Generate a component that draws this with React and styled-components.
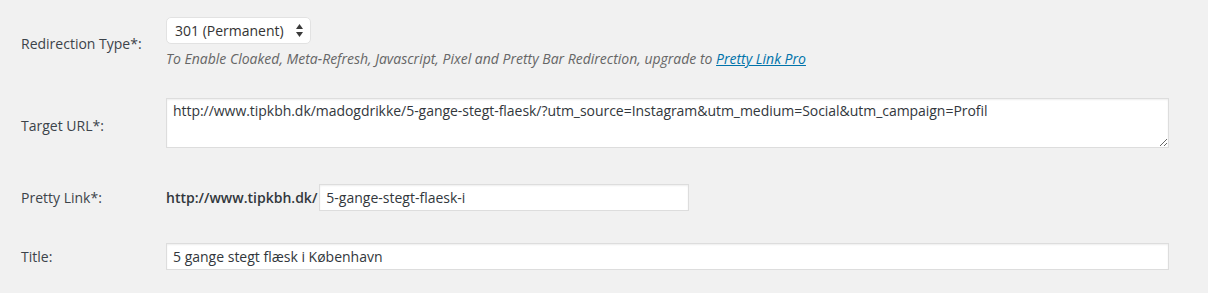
import React from 'react'
import styled, { createGlobalStyle } from 'styled-components'

const GlobalStyle = createGlobalStyle`
  body {
    margin: 0;
    background: #f1f1f1;
    font-family: 'Open Sans', 'Noto Sans', sans-serif;
    font-size: 14px;
    color: #444;
  }
`

const App = () => {
  return (
    <>
      <GlobalStyle />
      <FormTable>
        <Row pad="17px 0 17px">
          <Label>Redirection Type*:</Label>
          <Field>
            <SelectWrap>
              <Select defaultValue="301">
                <option value="301">301 (Permanent)</option>
                <option value="302">302 (Temporary)</option>
                <option value="307">307 (Temporary)</option>
              </Select>
              <Arrows width="7" height="13" viewBox="0 0 7 13">
                <path d="M3.5 0 L7 5 L0 5 Z" fill="#3a3a3a" />
                <path d="M0 8 L7 8 L3.5 13 Z" fill="#3a3a3a" />
              </Arrows>
            </SelectWrap>
            <Description>
              To Enable Cloaked, Meta-Refresh, Javascript, Pixel and Pretty Bar
              Redirection, upgrade to <ProLink href="#">Pretty Link Pro</ProLink>
            </Description>
          </Field>
        </Row>

        <Row pad="12px 0 14px">
          <Label>Target URL*:</Label>
          <Field>
            <TextArea
              defaultValue="http://www.tipkbh.dk/madogdrikke/5-gange-stegt-flaesk/?utm_source=Instagram&utm_medium=Social&utm_campaign=Profil"
            />
          </Field>
        </Row>

        <Row pad="17px 0 15px">
          <Label>Pretty Link*:</Label>
          <Field>
            <SlugLine>
              <BaseUrl>http://www.tipkbh.dk/</BaseUrl>
              <TextInput width="370px" defaultValue="5-gange-stegt-flaesk-i" />
            </SlugLine>
          </Field>
        </Row>

        <Row pad="17px 0 15px">
          <Label>Title:</Label>
          <Field>
            <TextInput width="1003px" defaultValue="5 gange stegt flæsk i København" />
          </Field>
        </Row>
      </FormTable>
    </>
  )
}

const FormTable = styled.div`
  display: flex;
  flex-direction: column;
  padding-left: 21px;
`

const Row = styled.div`
  display: grid;
  grid-template-columns: 145px 1004px;
  align-items: center;
  padding: ${(props) => props.pad};
`

const Label = styled.div`
  font-size: 14px;
  line-height: 20px;
  color: #3c434a;
  margin-top: 1px;
`

const Field = styled.div`
  display: flex;
  flex-direction: column;
  align-items: flex-start;
`

const SelectWrap = styled.div`
  position: relative;
  width: 145px;
  height: 27px;
`

const Select = styled.select`
  appearance: none;
  -webkit-appearance: none;
  width: 100%;
  height: 100%;
  box-sizing: border-box;
  margin: 0;
  padding: 0 24px 0 8px;
  border: 1px solid #e2e2e2;
  border-radius: 5px;
  background: #fff;
  font-family: 'Open Sans', 'Noto Sans', sans-serif;
  font-size: 14px;
  color: #333;
  outline: none;
`

const Arrows = styled.svg`
  position: absolute;
  right: 8px;
  top: 7px;
  pointer-events: none;
`

const Description = styled.p`
  margin: 5px 0 0;
  font-size: 14px;
  line-height: 20px;
  font-style: italic;
  color: #666;
`

const ProLink = styled.a`
  color: #0073aa;
  text-decoration: underline;
`

const TextArea = styled.textarea`
  width: 1003px;
  height: 50px;
  box-sizing: border-box;
  margin: 0 0 5px;
  padding: 2px 6px;
  border: 1px solid #ddd;
  box-shadow: inset 0 1px 2px rgba(0, 0, 0, 0.07);
  background: #fff;
  font-family: 'Open Sans', 'Noto Sans', sans-serif;
  font-size: 14px;
  letter-spacing: -0.04px;
  line-height: 20px;
  color: #32373c;
  resize: both;
  outline: none;
  display: block;
`

const SlugLine = styled.div`
  display: flex;
  align-items: center;
  gap: 2px;
`

const BaseUrl = styled.strong`
  font-weight: 600;
  font-size: 14px;
  color: #32373c;
`

const TextInput = styled.input`
  width: ${(props) => props.width};
  height: 27px;
  box-sizing: border-box;
  margin: 0;
  padding: 2px 6px;
  border: 1px solid #ddd;
  box-shadow: inset 0 1px 2px rgba(0, 0, 0, 0.07);
  background: #fff;
  font-family: 'Open Sans', 'Noto Sans', sans-serif;
  font-size: 14px;
  color: #32373c;
  outline: none;
`

export default App
